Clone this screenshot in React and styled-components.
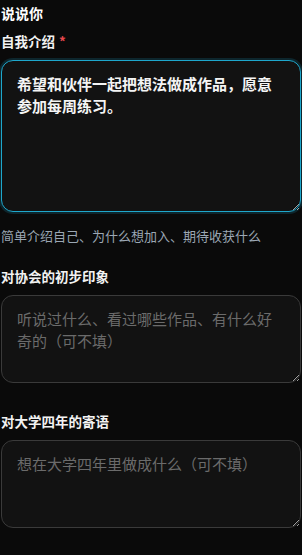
import React from 'react';
import styled, { createGlobalStyle } from 'styled-components';

const GlobalStyle = createGlobalStyle`
      html, body {
            margin: 0;
            padding: 0;
            background: #0a0a0a;
      }
      body {
            font-family: "Noto Sans CJK SC", "Noto Sans", sans-serif;
            color: #f2f2f2;
      }
`;

const Page = styled.div`
      padding: 3px 1px 0 1px;
      min-height: 555px;
      box-sizing: border-box;
      background: #0a0a0a;
`;
const Title = styled.h2`
      margin: 0 0 8px 0;
      font-size: 14px;
      line-height: 20px;
      font-weight: 700;
      color: #ffffff;
`;
const Field = styled.div`
      margin-bottom: ${p => p.$gap}px;
`;
const Label = styled.label`
      display: block;
      font-size: 13.5px;
      line-height: 20px;
      font-weight: 700;
      color: #f2f2f2;
      margin-bottom: 9px;
`;
const Star = styled.span`
      color: #e5484d;
      margin-left: 4px;
`;
const TextArea = styled.textarea`
      display: block;
      width: 100%;
      height: ${p => p.$h}px;
      box-sizing: border-box;
      margin: 0;
      padding: 12px 15px;
      border-radius: 12px;
      border: 1px solid ${p => (p.$active ? '#1ea7cc' : '#3a3a3a')};
      box-shadow: ${p => (p.$active ? '0 0 0 2px rgba(30, 167, 204, 0.18)' : 'none')};
      background: #121212;
      color: #f4f4f4;
      font-family: "Noto Sans CJK SC", "Noto Sans", sans-serif;
      font-size: 15px;
      font-weight: ${p => (p.$active ? 700 : 400)};
      line-height: 22px;
      resize: vertical;
      outline: none;
      &::placeholder {
            color: #6b6b6b;
            font-weight: 400;
      }
`;
const Hint = styled.div`
      margin-top: 14px;
      font-size: 13px;
      line-height: 20px;
      color: #9ba7b4;
`;

const App = () => {
      return (
            <Page>
                  <GlobalStyle />
                  <Title>说说你</Title>

                  <Field $gap={20}>
                        <Label>自我介绍<Star>*</Star></Label>
                        <TextArea $h={152} $active defaultValue="希望和伙伴一起把想法做成作品，愿意参加每周练习。" />
                        <Hint>简单介绍自己、为什么想加入、期待收获什么</Hint>
                  </Field>

                  <Field $gap={28}>
                        <Label>对协会的初步印象</Label>
                        <TextArea $h={88} placeholder="听说过什么、看过哪些作品、有什么好奇的（可不填）" />
                  </Field>

                  <Field $gap={20}>
                        <Label>对大学四年的寄语</Label>
                        <TextArea $h={88} placeholder="想在大学四年里做成什么（可不填）" />
                  </Field>
            </Page>
      )
}

export default App
